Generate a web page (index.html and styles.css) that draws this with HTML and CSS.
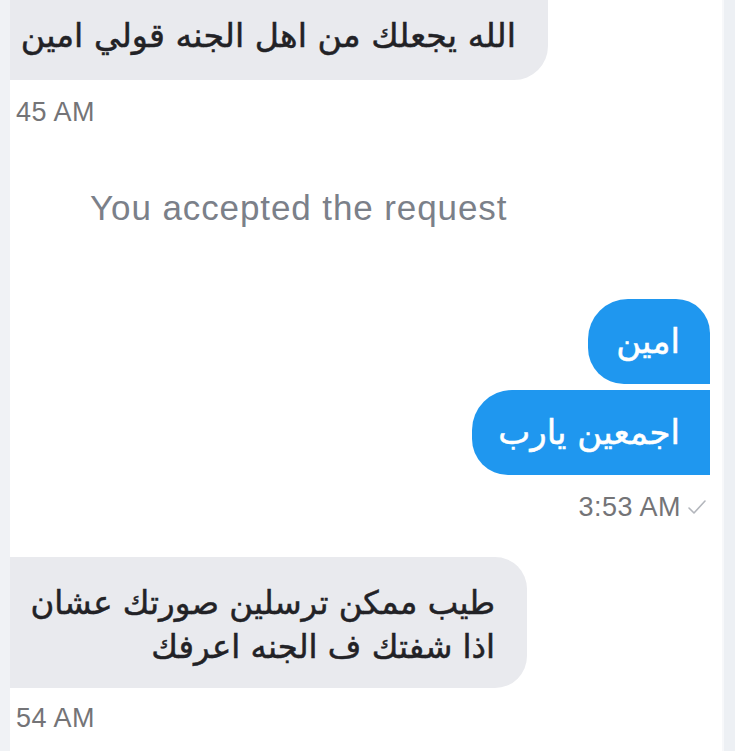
FILE: index.html
```html
<!DOCTYPE html>
<html lang="ar">
<head>
<meta charset="utf-8">
<link rel="stylesheet" href="styles.css">
</head>
<body>
<div class="screen">
  <div class="edge-left"></div>
  <div class="chat">
    <div class="bubble in top-bubble" dir="rtl">الله يجعلك من اهل الجنه قولي امين</div>
    <div class="stamp stamp-first">45 AM</div>
    <div class="system">You accepted the request</div>
    <div class="bubble out out-first" dir="rtl">امين</div>
    <div class="bubble out out-last" dir="rtl">اجمعين يارب</div>
    <div class="stamp stamp-out">3:53 AM <svg class="tick" width="20" height="16" viewBox="0 0 20 16"><polyline points="2,9 7,14 18,2" fill="none" stroke="#b3b6bc" stroke-width="1.6" stroke-linecap="round" stroke-linejoin="round"/></svg></div>
    <div class="bubble in bottom-bubble" dir="rtl">طيب ممكن ترسلين صورتك عشان<br>اذا شفتك ف الجنه اعرفك</div>
    <div class="stamp stamp-last">54 AM</div>
  </div>
  <div class="edge-right"></div>
</div>
</body>
</html>
```

FILE: styles.css
```css
html, body {
  margin: 0;
  padding: 0;
  background: #ffffff;
}
.screen {
  display: flex;
  width: 735px;
  height: 751px;
  overflow: hidden;
}
.edge-left {
  width: 10px;
  background: #f0f2f5;
  flex: none;
}
.edge-right {
  width: 13px;
  flex: none;
  background: #edf0f4;
  border-left: 2px solid #f7f8fa;
  box-sizing: border-box;
}
.chat {
  flex: 1;
  display: flex;
  flex-direction: column;
  align-items: flex-start;
}
.bubble {
  font-family: "DejaVu Sans", sans-serif;
  font-size: 34px;
  box-sizing: border-box;
  white-space: nowrap;
  -webkit-text-stroke: 0.5px currentColor;
}
.in {
  background: #e9eaee;
  color: #222226;
}
.top-bubble {
  width: 538px;
  height: 80px;
  padding: 14px 32px 0 8px;
  font-size: 33.3px;
  text-align: right;
  line-height: 44px;
  border-bottom-right-radius: 34px;
}
.stamp {
  font-family: "Liberation Sans", sans-serif;
  font-size: 27px;
  line-height: 30px;
  color: #747477;
  letter-spacing: 0.5px;
}
.stamp-first {
  margin: 17px 0 0 6px;
}
.system {
  font-family: "Liberation Sans", sans-serif;
  font-size: 35px;
  line-height: 40px;
  letter-spacing: 0.9px;
  color: #7b8089;
  margin: 61px 0 0 80px;
}
.out {
  background: #1f97ef;
  color: #ffffff;
  align-self: flex-end;
  margin-right: 12px;
  height: 85px;
  line-height: 85px;
  padding: 0 30px;
  text-align: right;
}
.out-first {
  width: 122px;
  margin-top: 71px;
  border-radius: 40px 34px 0 36px;
}
.out-last {
  width: 238px;
  margin-top: 6px;
  border-radius: 40px 0 0 36px;
}
.stamp-out {
  align-self: flex-end;
  margin: 17px 15px 0 0;
  display: flex;
  align-items: center;
  gap: 6px;
}
.tick {
  display: block;
}
.bottom-bubble {
  margin-top: 35px;
  width: 517px;
  height: 131px;
  padding: 24px 32px 0 8px;
  font-size: 32.4px;
  line-height: 44px;
  text-align: right;
  border-radius: 0 32px 32px 0;
}
.stamp-last {
  margin: 15px 0 0 6px;
}
```
